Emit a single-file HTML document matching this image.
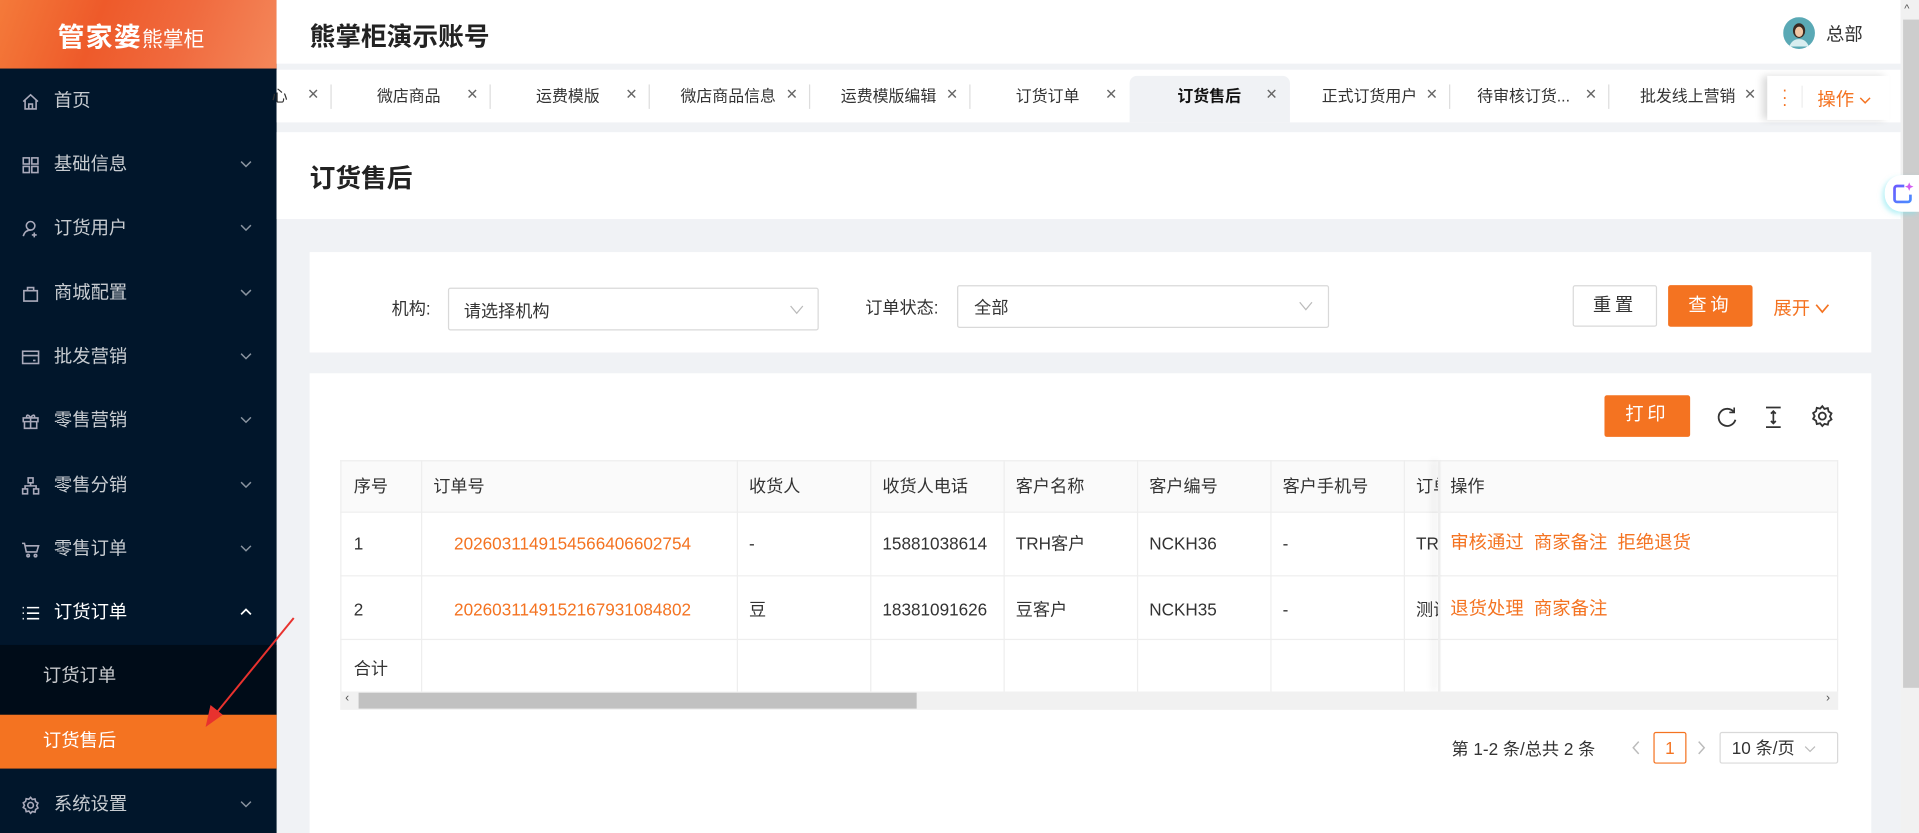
<!DOCTYPE html>
<html><head><meta charset="utf-8">
<style>
*{box-sizing:border-box;margin:0;padding:0}
html,body{width:1919px;height:833px;overflow:hidden;background:#f0f2f5}
body{font-family:"Liberation Sans","Noto Sans CJK SC",sans-serif;color:#333}
#w{position:absolute;left:0;top:0;width:1568px;height:681px;transform:scale(1.22385);transform-origin:0 0;background:#f0f2f5;overflow:hidden}
.a{position:absolute}
.sb{left:0;top:0;width:226px;height:681px;background:#01162b}
.logo{left:0;top:0;width:226px;height:56px;background:linear-gradient(110deg,#f47a3a 0%,#ee5a2a 35%,#f06a3e 65%,#f4875a 100%);color:#fff}
.mi{position:absolute;left:0;width:226px;height:44px;color:rgba(255,255,255,.78);font-size:15px;line-height:44px}
.mi .t{position:absolute;left:44px}
.mi svg.ic{position:absolute;left:17px;top:14px}
.mi .ar{position:absolute;left:196px;top:17px}
.tab{position:absolute;top:57px;height:43px;font-size:13px;color:#333;line-height:43px;white-space:nowrap}
.x{position:absolute;top:71px;font-size:12px;color:#666;line-height:12px}
.sep{position:absolute;top:69px;width:1px;height:20px;background:#ddd}
.btn{position:absolute;height:34px;line-height:32px;text-align:center;font-size:15px;letter-spacing:3px;border-radius:2px}
.th,.td{position:absolute;font-size:14px;line-height:20px;white-space:nowrap}
.org{color:#f47321}
.vl{position:absolute;top:376px;width:1px;height:189px;background:#eee}
.hl{position:absolute;left:278px;width:1224px;height:1px;background:#eee}
</style></head><body>
<div id="w">
<div class="a sb"></div>
<div class="a logo"><div class="a" style="left:47px;top:13px;font-size:22px;font-weight:bold;letter-spacing:1px;white-space:nowrap">管家婆<span style="font-size:17px;font-weight:normal;letter-spacing:0">熊掌柜</span></div></div>
<div class="mi" style="top:61px"><svg class="ic" width="16" height="16" viewBox="0 0 16 16" fill="none" stroke="#aab" stroke-width="1.3"><path d="M2 8L8 2.5 14 8M3.5 6.5V14h9V6.5M6.5 14v-4h3v4"/></svg><span class="t">首页</span></div>
<div class="mi" style="top:113px"><svg class="ic" width="16" height="16" viewBox="0 0 16 16" fill="none" stroke="#aab" stroke-width="1.3"><rect x="2" y="2" width="5" height="5"/><rect x="9" y="2" width="5" height="5"/><rect x="2" y="9" width="5" height="5"/><rect x="9" y="9" width="5" height="5"/></svg><span class="t">基础信息</span><svg class="ar" width="10" height="8" viewBox="0 0 10 8" fill="none" stroke="#8a94a0" stroke-width="1.2"><path d="M1 2l4 4 4-4"/></svg></div>
<div class="mi" style="top:165px"><svg class="ic" width="16" height="16" viewBox="0 0 16 16" fill="none" stroke="#aab" stroke-width="1.3"><circle cx="8" cy="5.5" r="3.5"/><path d="M2 14c1-3.5 3-5 6-5M11 11v4M9 13h4"/></svg><span class="t">订货用户</span><svg class="ar" width="10" height="8" viewBox="0 0 10 8" fill="none" stroke="#8a94a0" stroke-width="1.2"><path d="M1 2l4 4 4-4"/></svg></div>
<div class="mi" style="top:218px"><svg class="ic" width="16" height="16" viewBox="0 0 16 16" fill="none" stroke="#aab" stroke-width="1.3"><path d="M2.5 5.5h11V14h-11zM5.5 5.5V3h5v2.5"/></svg><span class="t">商城配置</span><svg class="ar" width="10" height="8" viewBox="0 0 10 8" fill="none" stroke="#8a94a0" stroke-width="1.2"><path d="M1 2l4 4 4-4"/></svg></div>
<div class="mi" style="top:270px"><svg class="ic" width="16" height="16" viewBox="0 0 16 16" fill="none" stroke="#aab" stroke-width="1.3"><rect x="1.5" y="3" width="13" height="10"/><path d="M1.5 6.5h13M10 10.5h2"/></svg><span class="t">批发营销</span><svg class="ar" width="10" height="8" viewBox="0 0 10 8" fill="none" stroke="#8a94a0" stroke-width="1.2"><path d="M1 2l4 4 4-4"/></svg></div>
<div class="mi" style="top:322px"><svg class="ic" width="16" height="16" viewBox="0 0 16 16" fill="none" stroke="#aab" stroke-width="1.3"><path d="M2 5.5h12v3H2zM3 8.5V14h10V8.5M8 5.5V14M8 5.5C6 2 4 3 5 5.5M8 5.5c2-3.5 4-2.5 3 0"/></svg><span class="t">零售营销</span><svg class="ar" width="10" height="8" viewBox="0 0 10 8" fill="none" stroke="#8a94a0" stroke-width="1.2"><path d="M1 2l4 4 4-4"/></svg></div>
<div class="mi" style="top:375px"><svg class="ic" width="16" height="16" viewBox="0 0 16 16" fill="none" stroke="#aab" stroke-width="1.3"><rect x="6" y="1.5" width="4" height="4"/><rect x="1.5" y="10.5" width="4" height="4"/><rect x="10.5" y="10.5" width="4" height="4"/><path d="M8 5.5V8M3.5 10.5V8h9v2.5"/></svg><span class="t">零售分销</span><svg class="ar" width="10" height="8" viewBox="0 0 10 8" fill="none" stroke="#8a94a0" stroke-width="1.2"><path d="M1 2l4 4 4-4"/></svg></div>
<div class="mi" style="top:427px"><svg class="ic" width="16" height="16" viewBox="0 0 16 16" fill="none" stroke="#aab" stroke-width="1.3"><path d="M1 3h2l1.5 7h8.5l1.5-5H4"/><circle cx="6" cy="13" r="1"/><circle cx="12" cy="13" r="1"/></svg><span class="t">零售订单</span><svg class="ar" width="10" height="8" viewBox="0 0 10 8" fill="none" stroke="#8a94a0" stroke-width="1.2"><path d="M1 2l4 4 4-4"/></svg></div>
<div class="mi" style="top:479px;color:#fff"><svg class="ic" width="16" height="16" viewBox="0 0 16 16" fill="none" stroke="#fff" stroke-width="1.3"><path d="M5 3.5h10M5 8h10M5 12.5h10M1.5 3.5h1M1.5 8h1M1.5 12.5h1"/></svg><span class="t">订货订单</span><svg class="ar" width="10" height="8" viewBox="0 0 10 8" fill="none" stroke="#fff" stroke-width="1.4"><path d="M1 6l4-4 4 4"/></svg></div>
<div class="a" style="left:0;top:527px;width:226px;height:101px;background:#000c18"></div>
<div class="mi" style="top:531px"><span class="t" style="left:35px">订货订单</span></div>
<div class="a" style="left:0;top:584px;width:226px;height:44px;background:#f47321"></div>
<div class="mi" style="top:584px;color:#fff"><span class="t" style="left:35px">订货售后</span></div>
<div class="mi" style="top:636px"><svg class="ic" width="16" height="16" viewBox="0 0 16 16" fill="none" stroke="#aab" stroke-width="1.3"><circle cx="8" cy="8" r="2.3"/><path d="M8 1.5l1.4 1.8 2.2-.5.5 2.2 1.9 1.2-1 2 1 2-1.9 1.2-.5 2.2-2.2-.5L8 14.5l-1.4-1.8-2.2.5-.5-2.2L2 9.8l1-1.8-1-2 1.9-1.2.5-2.2 2.2.5z"/></svg><span class="t">系统设置</span><svg class="ar" width="10" height="8" viewBox="0 0 10 8" fill="none" stroke="#8a94a0" stroke-width="1.2"><path d="M1 2l4 4 4-4"/></svg></div>
<svg class="a" style="left:160px;top:500px" width="90" height="100" viewBox="0 0 90 100"><path d="M80 5L14 86" stroke="#e8322e" stroke-width="1.6"/><path d="M8 94L12 76 22 84z" fill="#e8322e"/></svg>

<div class="a" style="left:226px;top:0;width:1327px;height:52px;background:#fff"></div>
<div class="a" style="left:253px;top:14px;font-size:21px;font-weight:bold;color:#222">熊掌柜演示账号</div>
<svg class="a" style="left:1457px;top:14px" width="26" height="26" viewBox="0 0 26 26"><circle cx="13" cy="13" r="13" fill="#5aa9b5"/><ellipse cx="13" cy="11" rx="5" ry="6" fill="#3a2a22"/><ellipse cx="13" cy="12" rx="3.3" ry="4.2" fill="#f1c7a5"/><path d="M5 24c2-5 5-6 8-6s6 1 8 6" fill="#d8eef0"/></svg>
<div class="a" style="left:1492px;top:17px;font-size:15px;color:#333">总部</div>

<div class="a" style="left:226px;top:57px;width:1327px;height:43px;background:#fff"></div>
<div class="tab" style="left:222px">心</div><div class="x" style="left:251px">✕</div>
<div class="sep" style="left:270px"></div>
<div class="tab" style="left:308px">微店商品</div><div class="x" style="left:381px">✕</div>
<div class="sep" style="left:400px"></div>
<div class="tab" style="left:438px">运费模版</div><div class="x" style="left:511px">✕</div>
<div class="sep" style="left:530px"></div>
<div class="tab" style="left:556px">微店商品信息</div><div class="x" style="left:642px">✕</div>
<div class="sep" style="left:661px"></div>
<div class="tab" style="left:687px">运费模版编辑</div><div class="x" style="left:773px">✕</div>
<div class="sep" style="left:792px"></div>
<div class="tab" style="left:830px">订货订单</div><div class="x" style="left:903px">✕</div>
<div class="a" style="left:923px;top:62px;width:131px;height:38px;background:#f0f2f5;border-radius:6px 6px 0 0"></div>
<div class="tab" style="left:962px;font-weight:bold;color:#111">订货售后</div><div class="x" style="left:1034px">✕</div>
<div class="tab" style="left:1080px">正式订货用户</div><div class="x" style="left:1165px">✕</div>
<div class="sep" style="left:1184px"></div>
<div class="tab" style="left:1207px">待审核订货...</div><div class="x" style="left:1295px">✕</div>
<div class="sep" style="left:1314px"></div>
<div class="tab" style="left:1340px">批发线上营销</div><div class="x" style="left:1425px">✕</div>
<div class="a" style="left:1444px;top:62px;width:100px;height:36px;background:#fff;box-shadow:-4px 0 6px rgba(0,0,0,.15)"></div>
<div class="a" style="left:1456px;top:70px;color:#f47321;font-size:14px;line-height:6px">·<br>·<br>·</div>
<div class="sep" style="left:1472px;top:70px;height:18px;background:#eee"></div>
<div class="a" style="left:1485px;top:70px;color:#f47321;font-size:15px">操作 <svg width="10" height="8" viewBox="0 0 10 8" fill="none" stroke="#f47321" stroke-width="1.2"><path d="M1 2l4 4 4-4"/></svg></div>

<div class="a" style="left:226px;top:108px;width:1327px;height:71px;background:#fff"></div>
<div class="a" style="left:253px;top:130px;font-size:21px;font-weight:bold;color:#222">订货售后</div>

<div class="a" style="left:253px;top:206px;width:1276px;height:82px;background:#fff"></div>
<div class="a" style="left:320px;top:242px;font-size:14px">机构:</div>
<div class="a" style="left:366px;top:235px;width:303px;height:35px;border:1px solid #d9d9d9;border-radius:2px"></div>
<div class="a" style="left:379px;top:244px;font-size:14px">请选择机构</div>
<svg class="a" style="left:645px;top:249px" width="12" height="8" viewBox="0 0 12 8" fill="none" stroke="#bbb" stroke-width="1"><path d="M1 1l5 6 5-6"/></svg>
<div class="a" style="left:707px;top:241px;font-size:14px">订单状态:</div>
<div class="a" style="left:782px;top:233px;width:304px;height:35px;border:1px solid #d9d9d9;border-radius:2px"></div>
<div class="a" style="left:796px;top:241px;font-size:14px">全部</div>
<svg class="a" style="left:1061px;top:246px" width="12" height="8" viewBox="0 0 12 8" fill="none" stroke="#bbb" stroke-width="1"><path d="M1 1l5 6 5-6"/></svg>
<div class="btn" style="left:1285px;top:233px;width:69px;border:1px solid #d9d9d9;background:#fff;color:#333">重置</div>
<div class="btn" style="left:1363px;top:233px;width:69px;background:#f47321;color:#fff;border:1px solid #f47321">查询</div>
<div class="a" style="left:1449px;top:241px;font-size:15px;color:#f47321">展开 <svg width="12" height="10" viewBox="0 0 12 10" fill="none" stroke="#f47321" stroke-width="1.4"><path d="M1 2l5 6 5-6"/></svg></div>

<div class="a" style="left:253px;top:305px;width:1276px;height:380px;background:#fff"></div>
<div class="btn" style="left:1311px;top:323px;width:70px;background:#f47321;color:#fff">打印</div>
<svg class="a" style="left:1401px;top:331px" width="20" height="20" viewBox="0 0 20 20" fill="none" stroke="#333" stroke-width="1.5"><path d="M16 6A7 7 0 1 0 17 12"/><path d="M16 2v4h-4" stroke-width="1.3"/></svg>
<svg class="a" style="left:1441px;top:331px" width="16" height="20" viewBox="0 0 16 20" fill="none" stroke="#333" stroke-width="1.4"><path d="M2 2h12M2 18h12M8 5v10M6 7l2-2 2 2M6 13l2 2 2-2"/></svg>
<svg class="a" style="left:1479px;top:330px" width="20" height="20" viewBox="0 0 16 16" fill="none" stroke="#333" stroke-width="1.2"><circle cx="8" cy="8" r="2.3"/><path d="M8 1.5l1.4 1.8 2.2-.5.5 2.2 1.9 1.2-1 2 1 2-1.9 1.2-.5 2.2-2.2-.5L8 14.5l-1.4-1.8-2.2.5-.5-2.2L2 9.8l1-1.8-1-2 1.9-1.2.5-2.2 2.2.5z"/></svg>

<div class="a" style="left:278px;top:376px;width:1224px;height:42px;background:#fafafa;border-top:1px solid #eee"></div>
<div class="hl" style="top:418px"></div><div class="hl" style="top:470px"></div><div class="hl" style="top:522px"></div>
<div class="vl" style="left:278px"></div><div class="vl" style="left:344px"></div><div class="vl" style="left:602px"></div><div class="vl" style="left:711px"></div><div class="vl" style="left:820px"></div><div class="vl" style="left:929px"></div><div class="vl" style="left:1038px"></div><div class="vl" style="left:1147px"></div><div class="vl" style="left:1501px"></div>
<div class="th" style="left:289px;top:387px">序号</div>
<div class="th" style="left:354px;top:387px">订单号</div>
<div class="th" style="left:612px;top:387px">收货人</div>
<div class="th" style="left:721px;top:387px">收货人电话</div>
<div class="th" style="left:830px;top:387px">客户名称</div>
<div class="th" style="left:939px;top:387px">客户编号</div>
<div class="th" style="left:1048px;top:387px">客户手机号</div>
<div class="th" style="left:1157px;top:387px;width:18px;overflow:hidden">订单</div>
<div class="td" style="left:289px;top:434px">1</div>
<div class="td org" style="left:371px;top:434px">2026031149154566406602754</div>
<div class="td" style="left:612px;top:434px">-</div>
<div class="td" style="left:721px;top:434px">15881038614</div>
<div class="td" style="left:830px;top:434px">TRH客户</div>
<div class="td" style="left:939px;top:434px">NCKH36</div>
<div class="td" style="left:1048px;top:434px">-</div>
<div class="td" style="left:1157px;top:434px;width:18px;overflow:hidden">TRH</div>
<div class="td" style="left:289px;top:488px">2</div>
<div class="td org" style="left:371px;top:488px">2026031149152167931084802</div>
<div class="td" style="left:612px;top:488px">豆</div>
<div class="td" style="left:721px;top:488px">18381091626</div>
<div class="td" style="left:830px;top:488px">豆客户</div>
<div class="td" style="left:939px;top:488px">NCKH35</div>
<div class="td" style="left:1048px;top:488px">-</div>
<div class="td" style="left:1157px;top:488px;width:18px;overflow:hidden">测试</div>
<div class="td" style="left:289px;top:536px">合计</div>
<div class="a" style="left:1175px;top:376px;width:2px;height:189px;box-shadow:-4px 0 6px rgba(0,0,0,.12);background:#eee"></div>
<div class="th" style="left:1185px;top:387px">操作</div>
<div class="td org" style="left:1185px;top:434px;font-size:15px">审核通过&nbsp;&nbsp;商家备注&nbsp;&nbsp;拒绝退货</div>
<div class="td org" style="left:1185px;top:488px;font-size:15px">退货处理&nbsp;&nbsp;商家备注</div>

<div class="a" style="left:278px;top:565px;width:1224px;height:15px;background:#f1f1f1"></div>
<div class="a" style="left:293px;top:566px;width:456px;height:13px;background:#c1c1c1"></div>
<div class="a" style="left:282px;top:565px;font-size:10px;color:#555">‹</div>
<div class="a" style="left:1492px;top:565px;font-size:10px;color:#555">›</div>

<div class="a" style="left:1186px;top:602px;font-size:14px">第 1-2 条/总共 2 条</div>
<svg class="a" style="left:1333px;top:605px" width="8" height="12" viewBox="0 0 8 12" fill="none" stroke="#bbb" stroke-width="1.2"><path d="M6 1L1.5 6 6 11"/></svg>
<div class="a" style="left:1351px;top:598px;width:27px;height:26px;border:1px solid #f47321;border-radius:2px;color:#f47321;font-size:14px;text-align:center;line-height:24px">1</div>
<svg class="a" style="left:1386px;top:605px" width="8" height="12" viewBox="0 0 8 12" fill="none" stroke="#bbb" stroke-width="1.2"><path d="M2 1l4.5 5L2 11"/></svg>
<div class="a" style="left:1405px;top:598px;width:97px;height:26px;border:1px solid #d9d9d9;border-radius:2px;font-size:14px;line-height:24px;padding-left:9px">10 条/页 <svg style="margin-left:4px" width="10" height="8" viewBox="0 0 10 8" fill="none" stroke="#bbb" stroke-width="1"><path d="M1 2l4 4 4-4"/></svg></div>

<div class="a" style="left:1553px;top:0;width:15px;height:681px;background:#f1f1f1"></div>
<div class="a" style="left:1555px;top:16px;width:13px;height:546px;background:#cdcdcd"></div>
<div class="a" style="left:1556px;top:2px;font-size:9px;color:#555">^</div>
<div class="a" style="left:1540px;top:143px;width:28px;height:30px;background:#fff;border-radius:14px 0 0 14px;box-shadow:-2px 2px 4px rgba(120,230,240,.5)"></div>
<svg class="a" style="left:1545px;top:148px" width="20" height="20" viewBox="0 0 20 20"><defs><linearGradient id="g" x1="0" y1="0" x2="1" y2="1"><stop offset="0" stop-color="#6a5cff"/><stop offset="1" stop-color="#4b8cff"/></linearGradient></defs><path d="M11 4H5a2 2 0 0 0-2 2v9a2 2 0 0 0 2 2h9a2 2 0 0 0 2-2v-4" fill="none" stroke="url(#g)" stroke-width="2.2"/><path d="M15 1l1 2.5 2.5 1-2.5 1-1 2.5-1-2.5-2.5-1 2.5-1z" fill="#d25cf0"/></svg>
</div>
</body></html>
